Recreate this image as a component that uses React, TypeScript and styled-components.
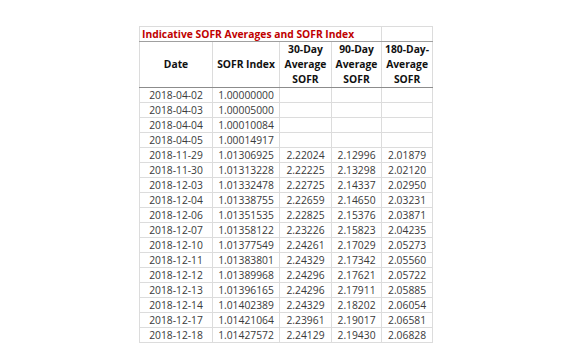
import styled, { createGlobalStyle } from "styled-components";
import React from "react";

const GlobalStyle = createGlobalStyle`
    body {
        margin: 0;
        background: #ffffff;
        font-family: "Open Sans", "Noto Sans CJK KR", sans-serif;
    }
`;

const rows: string[][] = [
    ["2018-04-02", "1.00000000", "", "", ""],
    ["2018-04-03", "1.00005000", "", "", ""],
    ["2018-04-04", "1.00010084", "", "", ""],
    ["2018-04-05", "1.00014917", "", "", ""],
    ["2018-11-29", "1.01306925", "2.22024", "2.12996", "2.01879"],
    ["2018-11-30", "1.01313228", "2.22225", "2.13298", "2.02120"],
    ["2018-12-03", "1.01332478", "2.22725", "2.14337", "2.02950"],
    ["2018-12-04", "1.01338755", "2.22659", "2.14650", "2.03231"],
    ["2018-12-06", "1.01351535", "2.22825", "2.15376", "2.03871"],
    ["2018-12-07", "1.01358122", "2.23226", "2.15823", "2.04235"],
    ["2018-12-10", "1.01377549", "2.24261", "2.17029", "2.05273"],
    ["2018-12-11", "1.01383801", "2.24329", "2.17342", "2.05560"],
    ["2018-12-12", "1.01389968", "2.24296", "2.17621", "2.05722"],
    ["2018-12-13", "1.01396165", "2.24296", "2.17911", "2.05885"],
    ["2018-12-14", "1.01402389", "2.24329", "2.18202", "2.06054"],
    ["2018-12-17", "1.01421064", "2.23961", "2.19017", "2.06581"],
    ["2018-12-18", "1.01427572", "2.24129", "2.19430", "2.06828"],
];

const widths = [73, 67, 52, 50, 51];

const App = () => {
    return (
        <>
            <GlobalStyle />
            <Page>
                <Table>
                    <colgroup>
                        {widths.map((w, i) => <col key={i} style={{ width: w }} />)}
                    </colgroup>
                    <thead>
                        <TitleRow>
                            <TitleCell colSpan={4}>Indicative SOFR Averages and SOFR Index</TitleCell>
                            <TitleCell />
                        </TitleRow>
                        <HeadRow>
                            <HeadCell>Date</HeadCell>
                            <HeadCell>SOFR Index</HeadCell>
                            <HeadCell>30-Day<br />Average<br />SOFR</HeadCell>
                            <HeadCell>90-Day<br />Average<br />SOFR</HeadCell>
                            <HeadCell>180-Day-<br />Average<br />SOFR</HeadCell>
                        </HeadRow>
                    </thead>
                    <tbody>
                        {rows.map((r) => (
                            <DataRow key={r[0]}>
                                {r.map((v, i) => <Cell key={i}>{v}</Cell>)}
                            </DataRow>
                        ))}
                    </tbody>
                </Table>
            </Page>
        </>
    );
};

const Page = styled.div`
    padding: 26px 0 0 139px;
`

const Table = styled.table`
    border-collapse: collapse;
    table-layout: fixed;
    width: 293px;
    font-size: 10.3px;
    color: #222;
`

const TitleRow = styled.tr`
    height: 15px;
`

const TitleCell = styled.td`
    border: 1px solid #dcdcdc;
    border-bottom: 1px solid #a0a0a0;
    color: #c00000;
    font-weight: 700;
    line-height: 13px;
    padding: 0 2px;
    white-space: nowrap;
    text-align: left;
`

const HeadRow = styled.tr`
    height: 45px;
`

const HeadCell = styled.th`
    border: 1px solid #dcdcdc;
    border-top: 1px solid #a0a0a0;
    border-bottom: 1px solid #8c8c8c;
    font-weight: 700;
    line-height: 15px;
    padding: 0;
    text-align: center;
    vertical-align: middle;
    color: #111;
`

const DataRow = styled.tr`
    height: 15px;
`

const Cell = styled.td`
    border: 1px solid #dcdcdc;
    line-height: 13px;
    padding: 0;
    text-align: center;
    white-space: nowrap;
    color: #3a3a3a;
`

export default App;
